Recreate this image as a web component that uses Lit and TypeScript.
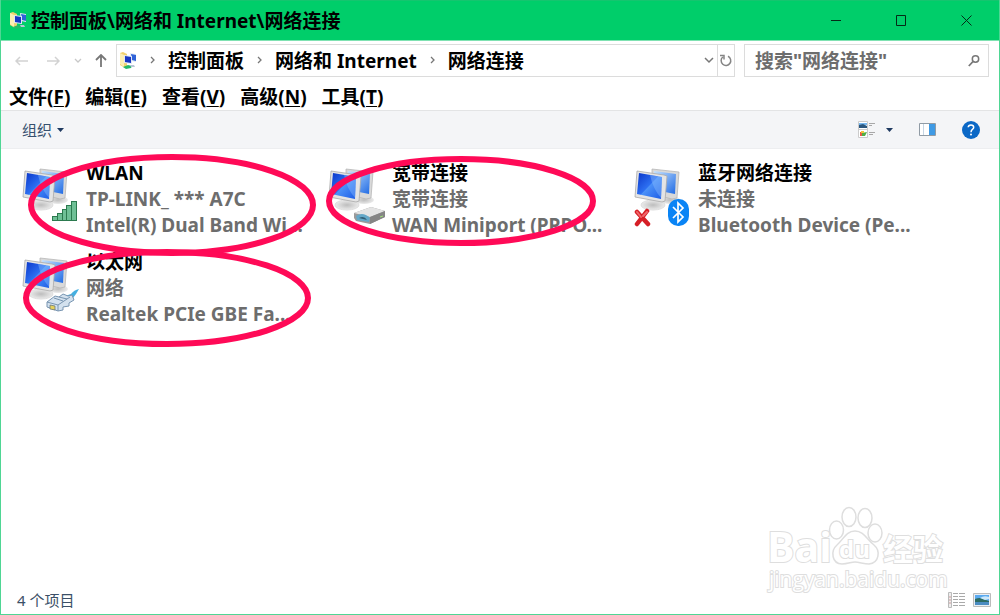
import { LitElement, html, css, svg, nothing } from "lit";
import { customElement, property } from "lit/decorators.js";

type Badge = "signal" | "modem" | "bluetooth" | "cable";

interface Connection {
  name: string;
  status: string;
  device: string;
  badge: Badge;
  offline?: boolean;
}

const connections: Connection[] = [
  { name: "WLAN", status: "TP-LINK_ *** A7C", device: "Intel(R) Dual Band Wi...", badge: "signal" },
  { name: "宽带连接", status: "宽带连接", device: "WAN Miniport (PPPO...", badge: "modem" },
  { name: "蓝牙网络连接", status: "未连接", device: "Bluetooth Device (Pe...", badge: "bluetooth", offline: true },
  { name: "以太网", status: "网络", device: "Realtek PCIe GBE Fa...", badge: "cable" },
];

const menus: [string, string][] = [
  ["文件", "F"],
  ["编辑", "E"],
  ["查看", "V"],
  ["高级", "N"],
  ["工具", "T"],
];

const folderIcon = html`<svg class="folder" width="18" height="18" viewBox="0 0 18 18" aria-hidden="true">
  <path d="M1 1l3-1 4 2v12l-2 2-5-3z" fill="#f0d16e" />
  <path d="M1 1l4 2v12l-4-3z" fill="#fbeeb5" />
  <path d="M11 1l6 1v8l-5-1z" fill="#dfe8f5" />
  <path d="M12 2l5 1v6l-4-1z" fill="#2f62d8" />
  <path d="M5 3l8 1v8l-8-1z" fill="#dfe8f5" />
  <path d="M6 4l6 1v6l-6-1z" fill="#1736c4" />
  <path d="M4 15l5-2 4 1-1 2-5 1z" fill="#23b968" />
  <path d="M11 13h4l1 2h-4z" fill="#b9c6d6" />
</svg>`;

@customElement("connection-icon")
export class ConnectionIcon extends LitElement {
  @property() badge: Badge = "signal";
  @property({ type: Boolean }) offline = false;

  static styles = css`
    :host { display: block; }
    svg { display: block; }
  `;

  private badgeArt() {
    switch (this.badge) {
      case "signal":
        return svg`<g fill="#6fc096" stroke="#2c7a4f" stroke-width="1">
          <rect x="29.5" y="49.5" width="5" height="4"/><rect x="34.5" y="46.5" width="5" height="7"/>
          <rect x="39.5" y="42.5" width="4" height="11"/><rect x="43.5" y="38.5" width="5" height="15"/>
          <rect x="48.5" y="34.5" width="5" height="19"/></g>`;
      case "modem":
        return svg`<path d="M25 46l17-6 14 4v6l-15 7-14-3-2-3z" fill="#9b9b9b"/>
          <path d="M25 46l17-6 14 4-15 6z" fill="#e4e4e4"/>
          <path d="M41 50l15-6v6l-15 7z" fill="#858585"/>
          <path d="M27 49q7-5 14 2l-1 4-12-2z" fill="#64a8c8"/>
          <path d="M30 51q5-3 8 2z" fill="#315d74"/><path d="M51 50l3-1" stroke="#9fe07a"/>`;
      case "bluetooth":
        return svg`<rect x="33" y="32" width="21" height="27" rx="10" fill="#0a84f5"/>
          <path d="M38 40l10 10-5 5V36l5 5-10 10" fill="none" stroke="#fff" stroke-width="1.7"/>`;
      case "cable":
        return svg`<path d="M39 41l9-3q3-4 8-5l-3 5-3 4z" fill="#45afe0"/>
          <path d="M24 46l8-6 4 1 4-3 5 2 4-1 2 5-5 3v3l-6 1v3l-5 1-11-4z" fill="#d3e1ee" stroke="#7895b1"/>
          <path d="M24 46l11 3 12-8M35 49v6M31 42l9 3M36 41l8 2" fill="none" stroke="#7895b1"/>
          <path d="M27 49l5 1v4l-5-1z" fill="#e5d15b" stroke="#5f6d76" stroke-width=".7"/>`;
    }
  }

  render() {
    return html`<svg width="58" height="62" viewBox="-1 -1 58 62" aria-hidden="true">
      <defs>
        <linearGradient id="screen" x1="0" y1="0" x2="1" y2="1">
          <stop offset="0" stop-color="#0b36c9" /><stop offset=".48" stop-color="#2d70f2" />
          <stop offset=".5" stop-color="#4b91f8" /><stop offset="1" stop-color="#1d5ce6" />
        </linearGradient>
        <linearGradient id="rear" x1="0" y1="0" x2="1" y2="1">
          <stop offset="0" stop-color="#c6e3ff" /><stop offset="1" stop-color="#1f6ae4" />
        </linearGradient>
        <radialGradient id="foot"><stop offset="0" stop-color="#bdbdbd" /><stop offset="1" stop-color="#ebebeb" /></radialGradient>
      </defs>
      <ellipse cx="35" cy="33" rx="10" ry="4" fill="url(#foot)" />
      <path d="M17 2l27 3-2 26-5 1-20-5z" fill="#d9d9d9" stroke="#b0b0b0" stroke-width=".7" />
      <path d="M19 4l22 3-1 20-20-4z" fill="url(#rear)" />
      <path d="M15 30l10 2v7h-10z" fill="#cfcfcf" />
      <ellipse cx="18" cy="38" rx="12" ry="5" fill="url(#foot)" stroke="#dedede" />
      <path d="M2 4l27 4 3 1-2 25-3 1L0 30z" fill="#e4e4e4" stroke="#a9a9a9" stroke-width=".8" />
      <path d="M4 6l23 4-1 22-24-5z" fill="url(#screen)" />
      <path d="M15 8l12 2-1 21q-8-9-11-23z" fill="#8fc0ff" opacity=".4" />
      ${this.badgeArt()}
      ${this.offline
        ? svg`<path d="M2 45l11 12M12 44L2 57" stroke="#d61f26" stroke-width="4.500" stroke-linecap="round"/>
              <path d="M2 45l4 5M12 45l-4 4" stroke="#f0686c" stroke-width="2" stroke-linecap="round"/>`
        : nothing}
    </svg>`;
  }
}

@customElement("app-root")
export class AppRoot extends LitElement {
  static styles = css`
    :host {
      display: block;
      font-family: "Noto Sans", "Noto Sans CJK SC", sans-serif;
      color: #000;
    }
    * { box-sizing: border-box; }
    svg { display: block; flex: none; }
    button {
      font: inherit; color: inherit; background: none; border: 0; padding: 0; margin: 0;
      display: flex; align-items: center; justify-content: center; white-space: nowrap;
    }
    .window {
      position: relative; min-height: 100vh; display: flex; flex-direction: column;
      border: 1px solid #4fd694; border-top: 0; background: #fff; overflow: hidden;
    }
    .titlebar {
      display: flex; align-items: center; height: 41px; padding-left: 8px;
      background: #00ce6a; border-top: 1px solid #15c56f; border-bottom: 1px solid #7fe2b2;
    }
    .title { flex: 1; margin: 0; padding-left: 4px; font-size: 19px; line-height: 26px; font-weight: 700; white-space: nowrap; }
    .caption { display: flex; }
    .caption button { width: 65px; height: 38px; }
    .address { display: flex; align-items: center; padding: 3px 10px 0 4px; }
    .nav { width: 32px; height: 32px; }
    .nav.narrow { width: 18px; }
    .nav.up { width: 28px; }
    .crumbs, .search { display: flex; align-items: center; height: 33px; border: 1px solid #dcdcdc; }
    .crumbs { flex: 1; min-width: 0; padding-left: 2px; margin-left: 1px; }
    .crumbs ol { display: flex; flex: 1; margin: 0; padding: 0; list-style: none; min-width: 0; overflow: hidden; }
    .crumbs li { display: flex; align-items: center; }
    .crumbs li svg { margin: 0 12px 0 13px; }
    .crumbs a { color: inherit; text-decoration: none; font-size: 19px; line-height: 28px; font-weight: 700; white-space: nowrap; }
    .drop { width: 17px; height: 31px; }
    .refresh { width: 17px; height: 31px; border-left: 1px solid #dcdcdc; }
    .search { width: 245px; margin-left: 9px; padding: 0 8px 0 10px; }
    .search input {
      flex: 1; min-width: 0; border: 0; outline: 0; padding: 0; background: none;
      font: 700 19px/28px "Noto Sans", "Noto Sans CJK SC", sans-serif; color: #6d6d6d;
    }
    .search input::placeholder { color: #6d6d6d; opacity: 1; }
    .menubar { display: flex; gap: 15px; padding: 7px 8px 0; height: 33px; }
    .menubar button { font-size: 19px; line-height: 26px; font-weight: 700; }
    .menubar u { text-decoration-thickness: 1px; text-underline-offset: 2px; }
    .toolbar {
      display: flex; align-items: center; height: 39px; padding: 0 19px 0 21px;
      background: #f4f5f7; border-top: 1px solid #e3e4e5; border-bottom: 1px solid #edeef0;
    }
    .organize { gap: 5px; margin-right: auto; font-size: 15px; line-height: 22px; color: #36506f; }
    .tool { gap: 11px; margin-left: 26px; }
    .items {
      position: relative; flex: 1; align-content: start; display: grid;
      grid-template-columns: repeat(auto-fill, 296px); gap: 11px 10px; padding: 11px 21px; margin: 0; list-style: none;
    }
    .item { display: grid; grid-template-columns: 58px 1fr; gap: 6px; }
    .item connection-icon { margin-top: 6px; }
    .copy { min-width: 0; font-size: 19px; line-height: 26px; font-weight: 700; color: #6d6d6d; }
    .copy div, .copy h2 { margin: 0; font-size: inherit; font-weight: inherit; white-space: nowrap; }
    .copy h2 { color: #000; }
    .status { display: flex; align-items: center; height: 29px; padding: 0 8px 0 16px; font-size: 15px; line-height: 22px; color: #3b5068; }
    .status .count { margin-right: auto; }
    .status button { margin-left: 8px; }
    .marks { position: absolute; left: 0; top: 149px; pointer-events: none; }
    .brand { position: absolute; right: 52px; bottom: 17px; width: 180px; height: 92px; pointer-events: none; overflow: visible; }
    .brand text { fill: #fff; stroke: #dedede; stroke-width: 2px; paint-order: stroke; font-family: "Open Sans", "Noto Sans CJK SC", sans-serif; }
    .brand .bold { font-weight: 700; }
  `;

  private chevron = html`<svg width="6" height="10" viewBox="0 0 6 10" aria-hidden="true"><path d="M1 1l3 3-3 3" fill="none" stroke="#777" stroke-width="1.3" /></svg>`;

  private down(color: string) {
    return html`<svg width="10" height="7" viewBox="0 0 10 7" aria-hidden="true"><path d="M1 1l4 4 4-4" fill="none" stroke=${color} stroke-width="1.5" /></svg>`;
  }

  private arrow = html`<svg width="7" height="4" viewBox="0 0 7 4" aria-hidden="true"><path d="M0 0h7L3.500 4z" fill="#1f3a60" /></svg>`;

  render() {
    return html`<div class="window">
      <header class="titlebar">
        ${folderIcon}
        <h1 class="title">控制面板\\网络和 Internet\\网络连接</h1>
        <div class="caption">
          <button aria-label="最小化"><svg width="11" height="11" viewBox="0 0 11 11"><path d="M0 5.500h10" stroke="#042b17" /></svg></button>
          <button aria-label="最大化"><svg width="11" height="11" viewBox="0 0 11 11"><path d="M.5.5h9v10h-9z" fill="none" stroke="#042b17" /></svg></button>
          <button aria-label="关闭"><svg width="11" height="11" viewBox="0 0 11 11"><path d="M.5.5l10 10M10.500.5l-10 10" stroke="#042b17" /></svg></button>
        </div>
      </header>

      <div class="address">
        <button class="nav" aria-label="后退"><svg width="13" height="10" viewBox="0 0 13 10"><path d="M5 1L1 5l4 4M1 5h12" fill="none" stroke="#d2d2d2" stroke-width="1.5" /></svg></button>
        <button class="nav" aria-label="前进"><svg width="13" height="10" viewBox="0 0 13 10"><path d="M8 1l4 4-4 4M0 5h12" fill="none" stroke="#d2d2d2" stroke-width="1.5" /></svg></button>
        <button class="nav narrow" aria-label="最近的位置"><svg width="8" height="6" viewBox="0 0 8 6"><path d="M1 1l3 3 3-3" fill="none" stroke="#c8c8c8" stroke-width="1.3" /></svg></button>
        <button class="nav up" aria-label="上移"><svg width="12" height="13" viewBox="0 0 12 13"><path d="M1 6l5-5 5 5M6 1v12" fill="none" stroke="#777" stroke-width="1.800" /></svg></button>
        <nav class="crumbs" aria-label="地址">
          ${folderIcon}
          <ol>
            ${["控制面板", "网络和 Internet", "网络连接"].map((c) => html`<li>${this.chevron}<a href="#">${c}</a></li>`)}
          </ol>
          <button class="drop" aria-label="展开">${this.down("#777")}</button>
          <button class="refresh" aria-label="刷新"><svg width="12" height="13" viewBox="0 0 12 13"><path d="M2.800 3A4.800 4.800 0 1 0 8 2.300M0 1.500h4v4" fill="none" stroke="#858585" stroke-width="1.500" /></svg></button>
        </nav>
        <label class="search">
          <input type="search" aria-label="搜索" placeholder='搜索"网络连接"' />
          <svg width="12" height="12" viewBox="0 0 12 12" aria-hidden="true"><circle cx="7.500" cy="4" r="3.200" fill="none" stroke="#777" stroke-width="1.500" /><path d="M5 6.500L.8 11" stroke="#777" stroke-width="1.800" /></svg>
        </label>
      </div>

      <div class="menubar">${menus.map(([t, k]) => html`<button><span>${t}(<u>${k}</u>)</span></button>`)}</div>

      <div class="toolbar">
        <button class="organize">组织 ${this.arrow}</button>
        <button class="tool" aria-label="更改视图">
          <svg width="17" height="17" viewBox="0 0 17 17">
            <path d="M.5.5h9v16h-9zM.5 8.500h9" fill="#fff" stroke="#ccc" /><path d="M1 2h8v2H1z" fill="#77b7ef" /><path d="M1 4l4-1 4 2v2H1z" fill="#2b577e" />
            <path d="M2 11h3v4H2z" fill="#e65843" /><path d="M4 12l5-1-2 4H4z" fill="#4fae46" /><path d="M3 10h3v2H3z" fill="#f0c53e" />
            <path d="M11 2.500h6M11 4.500h3M11 11.500h6M11 13.500h4" stroke="#a8a8a8" />
          </svg>${this.arrow}
        </button>
        <button class="tool" aria-label="显示预览窗格">
          <svg width="17" height="13" viewBox="0 0 17 13"><path d="M.5.5h16v12H.5z" fill="#fff" stroke="#909ba5" /><path d="M4.500 1v11" stroke="#c5d5e4" /><path d="M10 1h6v11h-6z" fill="#3f9ae4" /></svg>
        </button>
        <button class="tool" aria-label="帮助">
          <svg width="18" height="18" viewBox="0 0 18 18"><circle cx="9" cy="9" r="9" fill="#0b68c6" /><path d="M6.200 6.300Q6.400 4 9 4q2.700 0 2.700 2.300 0 1.200-1.300 2.100Q9 9.400 9 11.200" fill="none" stroke="#fff" stroke-width="1.500" /><circle cx="9" cy="13.500" r="1" fill="#fff" /></svg>
        </button>
      </div>

      <ul class="items">
        ${connections.map(
          (c) => html`<li class="item">
            <connection-icon .badge=${c.badge} .offline=${!!c.offline}></connection-icon>
            <div class="copy"><h2>${c.name}</h2><div>${c.status}</div><div>${c.device}</div></div>
          </li>`
        )}
      </ul>

      <footer class="status">
        <span class="count">4 个项目</span>
        <button aria-label="详细信息"><svg width="17" height="16" viewBox="0 0 17 16"><path d="M.5.500h3v15h-3z" fill="#eee" stroke="#bbb" /><path d="M1 5h2M1 8h2M1 11h2" stroke="#c99" /><path d="M5 1.500h5M11 1.500h6M5 4.500h5M11 4.500h6M5 7.500h5M11 7.500h6M5 10.500h5M11 10.500h6M5 13.500h5M11 13.500h6" stroke="#aaa" /></svg></button>
        <button aria-label="大图标"><svg width="18" height="14" viewBox="0 0 18 14"><path d="M.5.500h17v13H.5z" fill="#e9eef4" stroke="#bbb" /><path d="M2 2h14v10H2z" fill="#5aaaf0" /><path d="M2 6q5-2 8 0l6 2v1H2z" fill="#2d6b62" /><path d="M7 5q4-3 9-1v2l-4 1z" fill="#cce8fa" /><path d="M2 9h14v3H2z" fill="#4b8cc2" /></svg></button>
      </footer>

      <svg class="marks" width="640" height="210" viewBox="0 149 640 210" fill="none" stroke="#ff0a57" stroke-width="6" aria-hidden="true">
        <ellipse cx="171" cy="205" rx="141" ry="48" />
        <ellipse cx="460" cy="201" rx="132" ry="42" />
        <ellipse cx="166" cy="298" rx="141" ry="46" />
      </svg>

      <svg class="brand" viewBox="766 506 180 92" aria-hidden="true">
        <text class="bold" x="766" y="563" font-size="41">Bai</text>
        <g fill="#fff" stroke="#dedede" stroke-width="1.500">
          <ellipse cx="835.500" cy="531" rx="7" ry="9" /><ellipse cx="848" cy="518" rx="7" ry="9.500" />
          <ellipse cx="864" cy="519" rx="7" ry="9.500" /><ellipse cx="874" cy="534" rx="7" ry="9" />
          <path d="M854 532C845 532 842 541 836 546C829 552 831 565 841 565C847 565 850 563 854 563C858 563 863 565 868 565C878 564 880 552 873 546C866 541 863 532 854 532Z" />
        </g>
        <text class="bold" x="838" y="559" font-size="24">du</text>
        <text class="bold" x="882" y="561" font-size="30">经验</text>
        <text x="768" y="588" font-size="21">jingyan.baidu.com</text>
      </svg>
    </div>`;
  }
}
